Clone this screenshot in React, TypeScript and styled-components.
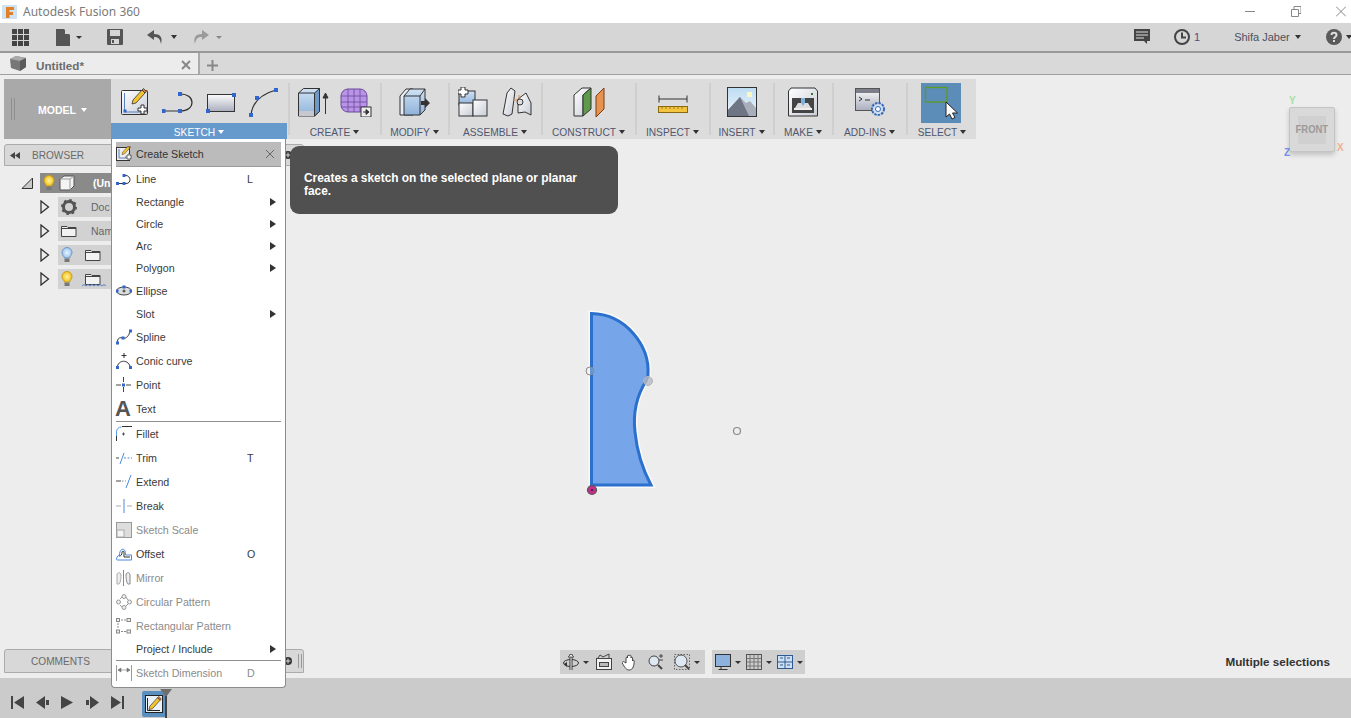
import React from "react";
import styled, { createGlobalStyle } from "styled-components";

const Global = createGlobalStyle`
  html, body { margin: 0; padding: 0; overflow: hidden; background: #ededed; }
  body { font-family: "Liberation Sans", Arial, sans-serif; }
  * { box-sizing: border-box; }
  svg { display: block; flex: none; }
`;

const Root = styled.div`
  height: 100vh; display: flex; flex-direction: column; overflow: hidden; position: relative;
`;
const TitleBar = styled.div`
  height: 23px; background: #fff; display: flex; align-items: center; padding-left: 2px;
`;
const TitleText = styled.span`
  margin-left: 5px; font: 12px "Noto Sans", sans-serif; color: #7b7b7b;
`;
const WinControls = styled.div`
  margin-left: auto; display: flex; align-items: center; gap: 35.5px; padding-right: 5px;
`;
const TopBar = styled.div`
  height: 30px; background: #d6d6d6; border-bottom: 2px solid #989898; display: flex; align-items: center; overflow: hidden; white-space: nowrap;
`;
const TopSlot = styled.div<{ $ml: number }>`
  margin-left: ${p => p.$ml}px; display: flex; align-items: center; flex: none;
`;
const Caret = styled.span<{ $c?: string; $ml?: number; $s?: number }>`
  display: inline-block; flex: none; width: 0; height: 0;
  margin-left: ${p => p.$ml ?? 4}px;
  border-left: ${p => p.$s ?? 3.5}px solid transparent;
  border-right: ${p => p.$s ?? 3.5}px solid transparent;
  border-top: ${p => (p.$s ?? 3.5) + 0.5}px solid ${p => p.$c ?? "#333"};
`;
const UserName = styled.span`
  font-size: 11px; color: #4d5060;
`;
const CountText = styled.span`
  margin-left: 4px; font-size: 11px; color: #5a4a80;
`;
const TabBar = styled.div`
  height: 22px; background: #d9d9d9; border-bottom: 1px solid #a0a0a0; display: flex; align-items: stretch;
`;
const Tab = styled.div`
  width: 200px; background: #ececec; border-right: 2px solid #aaa; display: flex; align-items: center; padding-left: 10px;
`;
const TabTitle = styled.span`
  margin: 4px 0 0 10px; font-size: 11.7px; font-weight: bold; color: #6c6c6c;
`;
const TabClose = styled.div`
  margin: 3px 7px 0 auto;
`;
const TabPlus = styled.div`
  margin: 3px 0 0 7px; align-self: center;
`;
const Main = styled.div`
  flex: 1; position: relative; background: #ededed; display: flex; flex-direction: column; padding: 4px 0 5px 4px; min-height: 0;
`;
const Toolbar = styled.div`
  display: flex; align-self: flex-start; height: 60px; background: #dcdcdc; position: relative; z-index: 5;
`;
const ModelBlock = styled.div`
  width: 107px; background: #a9a9a9; display: flex; align-items: center; padding-left: 7px; color: #fff; font-size: 10.5px; font-weight: bold;
`;
const Grip = styled.div`
  width: 4px; height: 22px; border-left: 1px solid #8f8f8f; border-right: 1px solid #8f8f8f;
`;
const ModelLabel = styled.span`
  margin: 2px 0 0 23px; display: flex; align-items: center;
`;
const Group = styled.div<{ $w: number }>`
  width: ${p => p.$w}px; display: flex; flex-direction: column; position: relative;
`;
const IconRow = styled.div<{ $gap?: number }>`
  height: 44px; padding-top: 8px; display: flex; justify-content: center; align-items: flex-start; gap: ${p => p.$gap ?? 0}px;
`;
const GroupLabel = styled.div<{ $active?: boolean }>`
  height: 16px; padding-top: 2px; display: flex; align-items: center; justify-content: center;
  font-size: 10.2px; color: ${p => (p.$active ? "#fff" : "#51566e")};
  background: ${p => (p.$active ? "#6699cc" : "transparent")};
`;
const Sep = styled.div`
  width: 3px; margin: 4px 0;
  background: linear-gradient(#cfcfcf, #cfcfcf) 1px 0 / 2px 100% no-repeat;
`;
const SelectBox = styled.div`
  width: 40px; height: 40px; margin: -4px 0 0 -2px; background: #5b8db8;
`;
const Menu = styled.div`
  position: absolute; left: 0; top: 100%; width: 175px; height: 549px; background: #fff;
  border: 1px solid #8c8c8c; border-top: 0; border-radius: 0 0 4px 4px; padding: 3px 4px 0; color: #3a3a3a; z-index: 20;
`;
const MenuHeader = styled.div`
  height: 25px; background: #bbbbbb; border-bottom: 1px solid #9a9a9a; display: flex; align-items: center; font-size: 10.7px; color: #333;
`;
const HeaderIcon = styled.div`
  width: 20px;
`;
const HeaderClose = styled.div`
  margin-left: auto; margin-right: 6px;
`;
const Row = styled.div<{ $h: number; $off?: boolean }>`
  height: ${p => p.$h}px; display: grid; grid-template-columns: 20px 111px 20px 14px; align-items: center;
  font-size: 10.7px; color: ${p => (p.$off ? "#8b8b8b" : "#3a3a3a")};
`;
const Arrow = styled.span`
  grid-column: 4; width: 0; height: 0; margin-left: 3px;
  border-top: 4.5px solid transparent; border-bottom: 4.5px solid transparent; border-left: 6px solid #333;
`;
const MenuSep = styled.div`
  height: 1px; background: #8f8f8f;
`;
const Tooltip = styled.div`
  position: absolute; left: calc(100% + 5px); top: 7px; width: 328px; height: 68px; background: #505050; border-radius: 9px;
  display: flex; align-items: center; padding: 10px 36px 0 14px; color: #fff; font-size: 11.9px; font-weight: bold; line-height: 13px;
`;
const Side = styled.div`
  flex: 1; width: 300px; padding-top: 5px; min-height: 0;
`;
const PanelHead = styled.div<{ $h: number }>`
  height: ${p => p.$h}px; width: 300px; flex: none; background: #d8d8d8; border: 1px solid #ababab; border-radius: 3px 3px 0 0; display: flex; align-items: center;
  padding-left: 5px; font-size: 10.1px; color: #6a6a6a; position: relative;
`;
const PanelLabel = styled.span<{ $ml: number }>`
  margin-left: ${p => p.$ml}px;
`;
const PanelEnd = styled.div`
  margin-left: auto; margin-right: 1px; display: flex; align-items: center; gap: 6px;
`;
const Tree = styled.div`
  padding-top: 5px;
`;
const TreeRow = styled.div<{ $indent: number }>`
  height: 24px; display: flex; align-items: center; padding-left: ${p => p.$indent}px;
`;
const Pill = styled.div<{ $dark?: boolean }>`
  width: ${p => (p.$dark ? 72 : 54)}px; height: 20px; margin-left: ${p => (p.$dark ? 7 : 8)}px; background: ${p => (p.$dark ? "#8a8a8a" : "#d2d2d2")};
  display: flex; align-items: center; padding-left: 3px; gap: 4px;
  font-size: 10.5px; font-weight: ${p => (p.$dark ? "bold" : "normal")}; color: ${p => (p.$dark ? "#fff" : "#666")}; white-space: nowrap;
`;
const PillText = styled.span<{ $ml: number }>`
  margin-left: ${p => p.$ml}px;
`;
const BottomRow = styled.div`
  display: flex; align-items: center; height: 24px; flex: none;
`;
const NavArea = styled.div`
  margin-left: 256px; margin-top: 2px; display: flex; gap: 7px;
`;
const NavGroup = styled.div<{ $w: number }>`
  width: ${p => p.$w}px; height: 24px; background: #cfcfcf; display: flex; align-items: center; padding-left: 3px;
`;
const NavCaret = styled(Caret)`
  margin: 0 5px 0 4px;
`;
const NavSpace = styled.span<{ $w: number }>`
  width: ${p => p.$w}px; flex: none;
`;
const Status = styled.div`
  margin-left: auto; margin-right: 21px; font-size: 11.7px; font-weight: bold; color: #333;
`;
const Timeline = styled.div`
  height: 40px; background: #cbcbcb; display: flex; align-items: center; padding: 8px 0 0 11px; position: relative; flex: none;
`;
const TimeBtn = styled.div`
  margin-right: 12px;
`;
const Feature = styled.div`
  margin-left: 6px; width: 24px; height: 26px; margin-top: 4px; background: #5a8fc0; border-radius: 2px; display: flex; align-items: center; justify-content: center;
`;
const Marker = styled.div`
  position: absolute; left: 160px; top: 11px; width: 12px; height: 8px; background: #6e6e6e; clip-path: polygon(0 0, 100% 0, 50% 100%);
`;
const Playhead = styled.div`
  position: absolute; left: 165px; top: 18px; width: 2px; height: 22px; background: #444;
`;
const SketchLayer = styled.svg`
  position: absolute; left: 560px; top: 225px;
`;
const Cube = styled.div`
  position: absolute; left: 1289px; top: 32px; width: 46px; height: 45px; background: #d9d9d9; border: 1px solid #c4c4c4; border-radius: 2px;
  box-shadow: 0 3px 5px rgba(0,0,0,.18); display: flex; align-items: center; justify-content: center;
`;
const CubeFace = styled.div`
  width: 28px; height: 28px; padding-bottom: 2px; background: #d0d0d0; display: flex; align-items: center; justify-content: center;
  font-size: 11.5px; font-weight: bold; color: #9a9a9a;
`;
const CubeText = styled.span`
  display: inline-block; transform: scaleX(.82);
`;
const Axis = styled.span<{ $x: number; $y: number; $c: string }>`
  position: absolute; left: ${p => p.$x}px; top: ${p => p.$y}px; font-size: 10px; font-weight: bold; color: ${p => p.$c}; line-height: 10px;
`;

const Defs = () => (
  <svg width="0" height="0" style={{ position: "absolute" }}>
    <defs>
      <linearGradient id="blue" x1="0" y1="0" x2="0" y2="1"><stop offset="0" stopColor="#cfe2f4" /><stop offset="1" stopColor="#8fb2da" /></linearGradient>
      <linearGradient id="gray" x1="0" y1="0" x2="0" y2="1"><stop offset="0" stopColor="#fdfdfd" /><stop offset="1" stopColor="#a9adbd" /></linearGradient>
      <linearGradient id="light" x1="0" y1="0" x2="1" y2="1"><stop offset="0" stopColor="#fff" /><stop offset="1" stopColor="#c8ccd6" /></linearGradient>
      <linearGradient id="sky" x1="0" y1="0" x2="0" y2="1"><stop offset="0" stopColor="#bcdcf2" /><stop offset="1" stopColor="#eef6fb" /></linearGradient>
      <radialGradient id="bulb"><stop offset="0" stopColor="#fff59a" /><stop offset="1" stopColor="#f1c01c" /></radialGradient>
      <radialGradient id="bulbB"><stop offset="0" stopColor="#e8f4ff" /><stop offset="1" stopColor="#9cc4ee" /></radialGradient>
    </defs>
  </svg>
);

const P = "#3366cc";
const Pt = ({ x, y, s = 3 }: { x: number; y: number; s?: number }) => <rect x={x - s / 2} y={y - s / 2} width={s} height={s} fill={P} />;

const Logo = () => (
  <svg width="16" height="16" viewBox="0 0 16 16">
    <rect x="0" y="1" width="15" height="14" fill="#cfe3f2" />
    <path d="M4 3h8v3H7.5v2H11v3H7.5v3H4z" fill="#e0812a" />
  </svg>
);
const Minimize = () => <svg width="10" height="11"><path d="M0 5.5h10" stroke="#888" /></svg>;
const Restore = () => <svg width="10" height="11"><path d="M.5 3.5h7v7h-7zM3 3V.5h7v7H8" fill="none" stroke="#888" /></svg>;
const WinClose = () => <svg width="10" height="11"><path d="M0 .5l10 10M10 .5l-10 10" stroke="#888" /></svg>;

const D = "#444";
const GridIcon = () => (
  <svg width="17" height="17" fill={D}>
    {[0, 6, 12].flatMap(y => [0, 6, 12].map(x => <rect key={`${x}${y}`} x={x} y={y} width="5" height="5" />))}
  </svg>
);
const DocIcon = () => <svg width="14" height="17"><path d="M0 0h8l6 6v11H0z" fill="#555" /><path d="M9 0l5 5H9z" fill="#d6d6d6" /></svg>;
const SaveIcon = () => (
  <svg width="16" height="16">
    <path d="M1 0h14a1 1 0 0 1 1 1v14a1 1 0 0 1-1 1H1a1 1 0 0 1-1-1V1a1 1 0 0 1 1-1z" fill="#555" />
    <rect x="3" y="1" width="10" height="6" fill="#d6d6d6" /><rect x="4" y="10" width="8" height="5" fill="#d6d6d6" /><rect x="5" y="11" width="2" height="3" fill="#555" />
  </svg>
);
const UndoIcon = ({ c, flip }: { c: string; flip?: boolean }) => (
  <svg width="17" height="14" viewBox="0 0 17 14" style={flip ? { transform: "scaleX(-1)" } : undefined}>
    <path d="M7 0L0 5l7 5V7c4 0 6 1 7 7 2-7-1-10-7-10z" fill={c} />
  </svg>
);
const CommentIcon = () => (
  <svg width="16" height="16"><path d="M0 0h16v12h-3v3l-3-3H0z" fill="#444" /><path d="M2 3h12M2 6h12M2 9h8" stroke="#ddd" /></svg>
);
const ClockIcon = () => (
  <svg width="16" height="16"><circle cx="8" cy="8" r="7" fill="none" stroke="#444" strokeWidth="2" /><path d="M8 3.5V8.5H12" fill="none" stroke="#444" strokeWidth="2" /></svg>
);
const HelpIcon = () => (
  <svg width="16" height="16"><circle cx="8" cy="8" r="8" fill="#5a5a5a" /><path d="M5.5 6c0-3 5-3 5 0 0 2-2.5 2-2.5 4" fill="none" stroke="#ddd" strokeWidth="2" /><rect x="7" y="11" width="2" height="2" fill="#ddd" /></svg>
);
const TabCube = () => (
  <svg width="16" height="16">
    <path d="M0 3l6-3 10 2v9l-6 4-9-3z" fill="#777" /><path d="M0 3l10 2 6-3-10-2z" fill="#aaa" /><path d="M10 5v10l6-4V2z" fill="#5c5c5c" />
  </svg>
);
const XIcon = ({ s = 10, c = "#888", w = 2 }: { s?: number; c?: string; w?: number }) => (
  <svg width={s} height={s}><path d={`M1 1L${s - 1} ${s - 1}M${s - 1} 1L1 ${s - 1}`} stroke={c} strokeWidth={w} /></svg>
);
const PlusIcon = () => <svg width="11" height="11"><path d="M5.5 0v11M0 5.5h11" stroke="#888" strokeWidth="2" /></svg>;

const Pencil = ({ x = 0, y = 0, s = 1 }: { x?: number; y?: number; s?: number }) => (
  <g transform={`translate(${x} ${y}) scale(${s})`}>
    <path d="M1 12l9-10 3 3-9 10-4 1z" fill="#f4c430" stroke="#333" strokeWidth=".8" />
    <path d="M10 2l1.5-1.5 3 3L13 5z" fill="#e27d2b" stroke="#333" strokeWidth=".8" />
  </g>
);
const CreateSketchBig = () => (
  <svg width="30" height="30" viewBox="0 0 30 30">
    <rect x="1.5" y="3.5" width="26" height="24" rx="1" fill="url(#light)" stroke="#333" />
    <path d="M4.5 6v19h16" fill="none" stroke="#5a7fc0" />
    <Pt x={5} y={24} />
    <Pencil x={12} y={1} />
    <path d="M21 18h3v3h3v3h-3v3h-3v-3h-3v-3h3z" fill="#fff" stroke="#333" />
  </svg>
);
const LineBig = () => (
  <svg width="32" height="30" viewBox="0 0 32 30">
    <path d="M1.500 24H18C26 24 30 20 30 15.500C30 11 26 7 18 7" fill="none" stroke="#333" strokeWidth="1.200" />
    <Pt x={1.500} y={24} s={4} /><Pt x={18} y={24} s={4} /><Pt x={18} y={7} s={4} />
  </svg>
);
const RectBig = () => (
  <svg width="30" height="30" viewBox="0 0 30 30">
    <rect x="1.500" y="7.500" width="27" height="17" fill="url(#gray)" stroke="#333" />
    <Pt x={28} y={8} s={4} /><Pt x={2} y={24} s={4} />
  </svg>
);
const ArcBig = () => (
  <svg width="30" height="30" viewBox="0 0 30 30">
    <path d="M3 28C4 18 10 8 28 3" fill="none" stroke="#333" strokeWidth="1.200" />
    <Pt x={3} y={28} s={4} /><Pt x={9} y={11} s={4} /><Pt x={28} y={3} s={4} />
  </svg>
);
const ExtrudeIcon = () => (
  <svg width="32" height="30" viewBox="0 0 32 30">
    <path d="M1.500 6l5-4.500h16v23l-5 4.500H1.500z" fill="url(#blue)" stroke="#333" />
    <path d="M17.500 6l5-4.500v23l-5 4.500z" fill="#6f98c8" stroke="#333" />
    <path d="M1.500 6h16" fill="none" stroke="#333" />
    <rect x="2" y="24" width="15" height="5" fill="#c5c8cf" />
    <path d="M28.500 27V8M26 11l2.500-5 2.500 5z" stroke="#333" fill="#333" />
  </svg>
);
const SculptIcon = () => (
  <svg width="32" height="30" viewBox="0 0 32 30">
    <rect x="1" y="2" width="26" height="23" rx="7" fill="#b993e8" stroke="#6a4a9a" />
    <path d="M1 9h26M1 15h26M1 20h26M8 2v23M14 2v23M20 2v23" stroke="#6a4a9a" strokeWidth=".8" />
    <rect x="21" y="20" width="10" height="10" fill="#eee" stroke="#333" />
    <path d="M23 25h4M26 22.500l3 2.500-3 2.500z" stroke="#333" fill="#333" />
  </svg>
);
const ModifyIcon = () => (
  <svg width="32" height="30" viewBox="0 0 32 30">
    <path d="M1 9l6-7h7v26H1z" fill="#e9ecf2" stroke="#333" />
    <path d="M5 9l6-7h15v21l-5 5H5z" fill="url(#blue)" stroke="#333" />
    <path d="M5 9h16v19M21 9l5-7" fill="none" stroke="#333" />
    <path d="M22 14h4v-3l5 5-5 5v-3h-4z" fill="#333" />
  </svg>
);
const AssembleNew = () => (
  <svg width="30" height="30" viewBox="0 0 30 30">
    <rect x="1" y="4" width="16" height="14" fill="url(#blue)" stroke="#333" />
    <rect x="1" y="16" width="14" height="13" fill="url(#light)" stroke="#333" />
    <rect x="15" y="13" width="14" height="16" fill="url(#light)" stroke="#333" />
    <path d="M3 0h4v3h3v4H7v3H3V7H0V3h3z" fill="#fff" stroke="#333" />
  </svg>
);
const JointIcon = () => (
  <svg width="30" height="30" viewBox="0 0 30 30">
    <path d="M1 27L5 6l4-5 4 3-3 23-4 2z" fill="url(#light)" stroke="#333" />
    <path d="M16 12l8-6 5 10v12l-6-3-7 1z" fill="url(#light)" stroke="#333" />
    <path d="M11 13h6M17 8v6" stroke="#e08a3c" />
    <circle cx="18" cy="15" r="3" fill="#ddd" stroke="#333" />
  </svg>
);
const ConstructIcon = () => (
  <svg width="32" height="30" viewBox="0 0 32 30">
    <path d="M1 8l8-7h9l-8 7v21H1z" fill="url(#light)" stroke="#333" />
    <path d="M10 8l8-7v21l-8 7z" fill="#5f9a4a" stroke="#333" />
    <path d="M23 9l8-8v21l-8 8z" fill="#e6934f" stroke="#7a3c10" />
  </svg>
);
const InspectIcon = () => (
  <svg width="30" height="30" viewBox="0 0 30 30">
    <path d="M1 12h28M1 8.500v7M29 8.500v7" stroke="#333" />
    <rect x="0.500" y="19.500" width="29" height="6" fill="#f2c440" stroke="#8a6a10" />
    <path d="M4 20v2M8 20v2M12 20v2M16 20v2M20 20v2M24 20v2" stroke="#8a6a10" strokeWidth=".8" />
  </svg>
);
const InsertIcon = () => (
  <svg width="30" height="30" viewBox="0 0 30 30">
    <rect x="0.500" y="0.500" width="29" height="29" fill="url(#sky)" stroke="#333" />
    <rect x="20" y="5" width="5" height="5" fill="#fdf6c0" />
    <path d="M1 29V23l12-13 6 6 4-2 6 7v8z" fill="#a8afba" />
    <path d="M1 29V23l12-13 9 19z" fill="#6e7686" />
  </svg>
);
const MakeIcon = () => (
  <svg width="30" height="30" viewBox="0 0 30 30">
    <path d="M3 1h24l2.500 3v25H.500V4z" fill="url(#light)" stroke="#333" />
    <rect x="23" y="6" width="2" height="2" fill="#2a7a2a" />
    <rect x="4" y="11" width="22" height="15" fill="#444" />
    <path d="M7 21l3-5h10l3 5z" fill="#ddd" />
    <path d="M13 11h4v5l-2 3-2-3z" fill="#7eb0e0" />
    <rect x="6" y="21" width="18" height="2" fill="#eee" />
  </svg>
);
const AddinsIcon = () => (
  <svg width="30" height="30" viewBox="0 0 30 30">
    <rect x="0.500" y="1.500" width="24" height="22" fill="url(#gray)" stroke="#555" />
    <rect x="1" y="2" width="23" height="4" fill="#7c7f8a" />
    <path d="M4 10l3 2-3 2M10 13h5" fill="none" stroke="#333" />
    <circle cx="23" cy="22" r="6" fill="#cfe0f5" stroke="#3a6ab0" strokeWidth="2" strokeDasharray="2.500 1" />
    <circle cx="23" cy="22" r="2.500" fill="#fff" stroke="#3a6ab0" />
  </svg>
);
const SelectIcon = () => (
  <svg width="40" height="40" viewBox="0 0 40 40">
    <rect x="4.500" y="4.500" width="21.500" height="14.500" fill="none" stroke="#5e9a1e" strokeWidth="1.300" />
    <path d="M25 19v15l3.500-3 2.500 5 3-1.500-2.500-4.500h5z" fill="#fff" stroke="#222" />
  </svg>
);

const M = ({ children }: { children: React.ReactNode }) => <svg width="16" height="16" viewBox="0 0 16 16" fill="none">{children}</svg>;
const MI: Record<string, React.ReactNode> = {
  sketch: <M><rect x=".5" y="1.500" width="13" height="13" fill="#eee" stroke="#333" /><path d="M3 3v9h8" stroke="#5a7fc0" /><Pencil x={6} y={-1} s={.6} /><path d="M10 10h2V8h2v2h2v2h-2v2h-2v-2h-2z" fill="#fff" stroke="#333" strokeWidth=".7" /></M>,
  line: <M><path d="M1 12.500h9c3 0 4-2 4-4s-2-4-4-4H8" stroke="#333" /><Pt x={1.500} y={12.500} /><Pt x={8} y={12.500} /><Pt x={8} y={4.500} /></M>,
  ellipse: <M><ellipse cx="8" cy="8" rx="7.500" ry="4" fill="#ddd" stroke="#444" /><path d="M6.500 8h3M8 6.500v3" stroke="#333" /><Pt x={8} y={4} /><Pt x={15} y={8} /><Pt x={1} y={8} /></M>,
  spline: <M><path d="M1.500 14C1 9 4 8 7 9s6-2 7-7" stroke="#333" /><Pt x={1.500} y={14} /><Pt x={7} y={9} /><Pt x={14.500} y={2} /></M>,
  conic: <M><path d="M1 15C2 6 13 6 14.500 15" stroke="#333" /><path d="M8 0v5M5.500 2.500h5" stroke="#333" /><Pt x={1.500} y={14.500} /><Pt x={14.500} y={14.500} /></M>,
  point: <M><path d="M0 8h5M10 8h5M7.500 0v5M7.500 10v5" stroke="#444" /><Pt x={7.500} y={8} /></M>,
  fillet: <M><path d="M.5 15V6c0-3 2-5 5-5" stroke="#5a9ae8" /><path d="M.5 15v-5M6 .5h10" stroke="#333" /><path d="M6 8h3M7.500 6.500v3" stroke="#333" strokeWidth=".8" /></M>,
  trim: <M><path d="M0 8h3" stroke="#444" /><path d="M8 3L4 14" stroke="#4a8ae0" /><path d="M8 8h8" stroke="#4a8ae0" strokeDasharray="2 1.500" /></M>,
  extend: <M><path d="M0 7h5" stroke="#444" /><path d="M6 7h4" stroke="#888" strokeDasharray="1.500 1.500" /><path d="M15 1L10 14" stroke="#4a8ae0" /></M>,
  break: <M><path d="M0 8h5M11 8h5" stroke="#aaa" /><path d="M8 1v14" stroke="#4a8ae0" /></M>,
  scale: <M><rect x=".5" y=".5" width="15" height="15" fill="#ddd" stroke="#999" /><rect x="1" y="8" width="7" height="7" fill="#f5f5f5" stroke="#aaa" /></M>,
  offset: <M><path d="M.5 13c0-3 3-4 3-4 0-5 3-7 5-5 1 1 1 4 1 5h6v5H2c-1 0-1.500 0-1.500-1z" stroke="#4a8ae0" /><path d="M3 10c2 0 3-1 3-4 0-1 2-1 2 0v5h6" stroke="#333" /></M>,
  mirror: <M><path d="M7.500 0v16" stroke="#888" /><path d="M1 14V5c0-3 4-3 4 0 0 4-1 9-2 9z" fill="#eee" stroke="#aaa" /><path d="M14 14V5c0-3-4-3-4 0 0 4 1 9 2 9z" fill="#eee" stroke="#888" /></M>,
  circular: <M><g fill="#eee" stroke="#999"><circle cx="8" cy="2.500" r="2" /><circle cx="2.500" cy="8" r="2" /><circle cx="13.500" cy="8" r="2" /><circle cx="8" cy="13.500" r="2" /></g><path d="M4 5l2-2M10 3l2 3M12 10l-2 2M4 11l2 2" stroke="#999" /></M>,
  rect: <M><g fill="#eee" stroke="#888"><rect x=".5" y=".5" width="3" height="3" /><rect x="11" y=".5" width="3.500" height="3" /><rect x=".5" y="12" width="3" height="3" /><rect x="11" y="12" width="3.500" height="3" /></g><path d="M5 2h5M5 13.500h5M2 5v6" stroke="#888" strokeDasharray="2 1" /></M>,
  dim: <M><path d="M.5 0v16M15.500 0v16" stroke="#999" /><path d="M2 5h12M2 5l3-2v4zM14 5l-3-2v4z" stroke="#777" fill="#777" strokeWidth=".6" /></M>,
};

type Item = { t: string; i?: string; k?: string; sub?: boolean; off?: boolean; h?: number } | "sep";
const items: Item[] = [
  { t: "Line", i: "line", k: "L" },
  { t: "Rectangle", sub: true, h: 22 }, { t: "Circle", sub: true, h: 22 }, { t: "Arc", sub: true, h: 22 }, { t: "Polygon", sub: true, h: 22 },
  { t: "Ellipse", i: "ellipse" }, { t: "Slot", sub: true, h: 22 }, { t: "Spline", i: "spline" }, { t: "Conic curve", i: "conic" }, { t: "Point", i: "point" },
  { t: "Text", i: "text" }, "sep",
  { t: "Fillet", i: "fillet" }, { t: "Trim", i: "trim", k: "T" }, { t: "Extend", i: "extend" }, { t: "Break", i: "break" },
  { t: "Sketch Scale", i: "scale", off: true }, { t: "Offset", i: "offset", k: "O" }, { t: "Mirror", i: "mirror", off: true },
  { t: "Circular Pattern", i: "circular", off: true }, { t: "Rectangular Pattern", i: "rect", off: true },
  { t: "Project / Include", sub: true, h: 22 }, "sep", { t: "Sketch Dimension", i: "dim", k: "D", off: true },
];
const BigA = styled.span`
  font-size: 22px; font-weight: bold; color: #555; line-height: 16px; margin-left: -1px;
`;

const SketchMenu = () => (
  <Menu>
    <MenuHeader>
      <HeaderIcon>{MI.sketch}</HeaderIcon>Create Sketch
      <HeaderClose><XIcon s={10} c="#666" w={1} /></HeaderClose>
    </MenuHeader>
    {items.map((it, n) =>
      it === "sep" ? <MenuSep key={n} /> : (
        <Row key={it.t} $h={it.h ?? 24} $off={it.off}>
          <div>{it.i === "text" ? <BigA>A</BigA> : it.i ? MI[it.i] : null}</div>
          <span>{it.t}</span>
          {it.k ? <span>{it.k}</span> : null}
          {it.sub ? <Arrow /> : null}
        </Row>
      )
    )}
    <Tooltip>Creates a sketch on the selected plane or planar face.</Tooltip>
  </Menu>
);

const Bulb = ({ blue }: { blue?: boolean }) => (
  <svg width="12" height="16" viewBox="0 0 12 16">
    <path d="M6 .5a5 5 0 0 1 5 5c0 2.500-2 3.500-2.500 5.500h-5C3 9 1 8 1 5.500a5 5 0 0 1 5-5z" fill={blue ? "url(#bulbB)" : "url(#bulb)"} stroke={blue ? "#6f96c4" : "#c79a1a"} />
    <rect x="3.500" y="11.500" width="5" height="3.500" fill="#777" />
  </svg>
);
const Folder = ({ wave }: { wave?: boolean }) => (
  <svg width="16" height="16" viewBox="0 0 16 16" overflow="visible">
    <path d="M.5 3.500v10h14.500v-9H7l-1-1z" fill="#f2f2f2" stroke="#444" />
    <path d="M.5 5.500h14.500" stroke="#444" />
    {wave ? <path d="M-3 15l2-1.500 2 1.500 2-1.500 2 1.500 2-1.500 2 1.500 2-1.500 2 1.500 2-1.500 2 1.500 2-1.500 2 1.500" stroke="#5a7fc0" fill="none" /> : null}
  </svg>
);
const Gear = () => (
  <svg width="16" height="16" viewBox="0 0 16 16">
    <circle cx="8" cy="8" r="5.500" fill="none" stroke="#555" strokeWidth="3" />
    <circle cx="8" cy="8" r="7" fill="none" stroke="#555" strokeWidth="2" strokeDasharray="2.500 3" />
  </svg>
);
const WhiteCube = () => (
  <svg width="16" height="16" viewBox="0 0 16 16">
    <path d="M1 4l4-3h10v10l-4 4H1z" fill="#f4f4f4" stroke="#555" /><path d="M1 4h10v11M11 4l4-3" fill="none" stroke="#999" />
  </svg>
);
const Expand = () => <svg width="10" height="14"><path d="M1 1l7.500 6L1 13z" fill="#ececec" stroke="#333" strokeWidth="1.300" /></svg>;
const Collapse = () => <svg width="12" height="12"><path d="M1 11.500h10.500V1z" fill="#c9c9c9" stroke="#333" /></svg>;
const Rewind = () => <svg width="10" height="7" fill="#444"><path d="M5 0v7L0 3.500zM10 0v7L5 3.500z" /></svg>;
const Pin = () => <svg width="8" height="8"><circle cx="4" cy="4" r="4" fill="#333" /><path d="M4 1.500v5M1.500 4h5" stroke="#ddd" /></svg>;
const GripV = () => <svg width="4" height="14"><path d="M.5 0v14M3.500 0v14" stroke="#999" /></svg>;

const N = ({ children }: { children: React.ReactNode }) => <svg width="16" height="18" viewBox="0 0 16 18" fill="none">{children}</svg>;
const Nav = {
  orbit: <N><ellipse cx="8" cy="10" rx="7.500" ry="3.500" stroke="#333" /><path d="M8 1v16" stroke="#333" strokeWidth="3" /><path d="M8 1v16" stroke="#fff" /><path d="M5 4l3-3 3 3z" fill="#eee" stroke="#333" strokeWidth=".7" /><path d="M1 11l3 3v-5z" fill="#333" /></N>,
  look: <N><rect x=".5" y="5.500" width="15" height="11" fill="#f1f1f1" stroke="#444" /><rect x="3.500" y="9.500" width="9" height="4" fill="#bbb" stroke="#444" /><path d="M2 5l2-3 3 2 6-3v4" stroke="#444" /></N>,
  hand: <N><path d="M4 10V5c0-1 1.500-1 1.500 0V3c0-1 1.700-1 1.700 0v0c0-1 1.800-1 1.800 0v2c0-1 1.600-1 1.600 0v3c0-1 1.600-1 1.600 0 0 4-1 9-5 9-3 0-4-2-7-7-.5-1 1-2 2-1z" fill="#fff" stroke="#444" /></N>,
  zoom: <N><circle cx="6" cy="8" r="5" fill="#dde8f2" stroke="#444" /><path d="M10 12l4 4" stroke="#444" strokeWidth="2" /><path d="M13 1v4M11 3h4M11 7h4" stroke="#444" /></N>,
  fit: <N><rect x=".5" y="1.500" width="15" height="15" stroke="#666" strokeDasharray="1.500 1.500" /><circle cx="7" cy="8" r="6" fill="#dde8f2" stroke="#555" /><path d="M11 12l4 4" stroke="#444" strokeWidth="2" /></N>,
  display: <N><rect x=".5" y="1.500" width="15" height="12" fill="#8db2de" stroke="#333" /><path d="M6 14v2M3.500 16.500h9" stroke="#333" /></N>,
  grid: <N><rect x=".5" y="1.500" width="15" height="15" fill="#ccc" stroke="#555" /><path d="M4 2v14M8 2v14M12 2v14M1 5.500h14M1 9h14M1 13h14" stroke="#777" /></N>,
  view: <N><rect x=".5" y="2.500" width="15" height="13" fill="#cfe0f2" stroke="#2e5a94" /><path d="M8 3v12M1 9h14" stroke="#2e5a94" /><path d="M3 5h3M10 5h3M3 12h3M10 12h3" stroke="#2e5a94" /></N>,
};
const T = "#444";
const Ctl = {
  start: <svg width="13" height="13"><path d="M0 0h2v13H0zM13 0v13L3 6.500z" fill={T} /></svg>,
  prev: <svg width="13" height="13"><path d="M9 0v13L0 6.500zM10 4h3v5h-3z" fill={T} /></svg>,
  play: <svg width="13" height="13"><path d="M0 0l12 6.500L0 13z" fill={T} /></svg>,
  next: <svg width="13" height="13"><path d="M4 0v13l9-6.500zM0 4h3v5H0z" fill={T} /></svg>,
  end: <svg width="13" height="13"><path d="M11 0h2v13h-2zM0 0v13l10-6.500z" fill={T} /></svg>,
};
const FeatureIcon = () => (
  <svg width="18" height="18" viewBox="0 0 18 18">
    <rect x=".5" y=".5" width="17" height="17" fill="#eaf1f8" stroke="#222" />
    <path d="M2.500 3v12.500H15" stroke="#222" fill="none" />
    <Pencil x={4} y={1} s={.85} />
  </svg>
);

const shapePath = "M591.500 313.500C625 314 650 345 648 375Q647.500 378 646 381C636 397 633 415 635 432C637 452 643 470 651 485L591.500 485Z";

const App = () => (
  <Root>
    <Global />
    <Defs />
    <TitleBar>
      <Logo />
      <TitleText>Autodesk Fusion 360</TitleText>
      <WinControls><Minimize /><Restore /><WinClose /></WinControls>
    </TitleBar>
    <TopBar>
      <TopSlot $ml={12}><GridIcon /></TopSlot>
      <TopSlot $ml={27}><DocIcon /><Caret $ml={6} $s={3} /></TopSlot>
      <TopSlot $ml={25}><SaveIcon /></TopSlot>
      <TopSlot $ml={24}><UndoIcon c="#555" /><Caret $ml={7} $s={3.500} /></TopSlot>
      <TopSlot $ml={15}><UndoIcon c="#9a9a9a" flip /><Caret $ml={7} $s={3} $c="#888" /></TopSlot>
      <TopSlot $ml={912}><CommentIcon /></TopSlot>
      <TopSlot $ml={24}><ClockIcon /><CountText>1</CountText></TopSlot>
      <TopSlot $ml={34}><UserName>Shifa Jaber</UserName><Caret $ml={5} /></TopSlot>
      <TopSlot $ml={25}><HelpIcon /><Caret $ml={4} /></TopSlot>
    </TopBar>
    <TabBar>
      <Tab>
        <TabCube />
        <TabTitle>Untitled*</TabTitle>
        <TabClose><XIcon /></TabClose>
      </Tab>
      <TabPlus><PlusIcon /></TabPlus>
    </TabBar>
    <Main>
      <Toolbar>
        <ModelBlock><Grip /><ModelLabel>MODEL<Caret $c="#fff" $ml={5} /></ModelLabel></ModelBlock>
        <Group $w={176}>
          <IconRow $gap={12}><CreateSketchBig /><LineBig /><RectBig /><ArcBig /></IconRow>
          <GroupLabel $active>SKETCH<Caret $c="#fff" $ml={3} /></GroupLabel>
          <SketchMenu />
        </Group>
        <Sep />
        <Group $w={89}><IconRow $gap={11}><ExtrudeIcon /><SculptIcon /></IconRow><GroupLabel>CREATE<Caret $ml={3} /></GroupLabel></Group>
        <Sep />
        <Group $w={65}><IconRow><ModifyIcon /></IconRow><GroupLabel>MODIFY<Caret $ml={3} /></GroupLabel></Group>
        <Sep />
        <Group $w={90}><IconRow $gap={14}><AssembleNew /><JointIcon /></IconRow><GroupLabel>ASSEMBLE<Caret $ml={3} /></GroupLabel></Group>
        <Sep />
        <Group $w={91}><IconRow><ConstructIcon /></IconRow><GroupLabel>CONSTRUCT<Caret $ml={3} /></GroupLabel></Group>
        <Sep />
        <Group $w={71}><IconRow><InspectIcon /></IconRow><GroupLabel>INSPECT<Caret $ml={3} /></GroupLabel></Group>
        <Sep />
        <Group $w={61}><IconRow><InsertIcon /></IconRow><GroupLabel>INSERT<Caret $ml={3} /></GroupLabel></Group>
        <Sep />
        <Group $w={56}><IconRow><MakeIcon /></IconRow><GroupLabel>MAKE<Caret $ml={3} /></GroupLabel></Group>
        <Sep />
        <Group $w={71}><IconRow><AddinsIcon /></IconRow><GroupLabel>ADD-INS<Caret $ml={3} /></GroupLabel></Group>
        <Sep />
        <Group $w={68}><IconRow><SelectBox><SelectIcon /></SelectBox></IconRow><GroupLabel>SELECT<Caret $ml={3} /></GroupLabel></Group>
      </Toolbar>

      <Side>
        <PanelHead $h={22}>
          <Rewind /><PanelLabel $ml={12}>BROWSER</PanelLabel>
          <PanelEnd><Pin /><GripV /></PanelEnd>
        </PanelHead>
        <Tree>
          <TreeRow $indent={17}><Collapse /><Pill $dark><Bulb /><WhiteCube /><PillText $ml={14}>(Un</PillText></Pill></TreeRow>
          <TreeRow $indent={36}><Expand /><Pill><Gear /><PillText $ml={10}>Doc</PillText></Pill></TreeRow>
          <TreeRow $indent={36}><Expand /><Pill><Folder /><PillText $ml={10}>Nam</PillText></Pill></TreeRow>
          <TreeRow $indent={36}><Expand /><Pill><Bulb blue /><PillText $ml={8}><Folder /></PillText></Pill></TreeRow>
          <TreeRow $indent={36}><Expand /><Pill><Bulb /><PillText $ml={8}><Folder wave /></PillText></Pill></TreeRow>
        </Tree>
      </Side>

      <BottomRow>
        <PanelHead $h={24}><PanelLabel $ml={21}>COMMENTS</PanelLabel><PanelEnd><Pin /><GripV /></PanelEnd></PanelHead>
        <NavArea>
          <NavGroup $w={145}>
            {Nav.orbit}<NavCaret $s={3} /><NavSpace $w={2} />{Nav.look}<NavSpace $w={10} />{Nav.hand}<NavSpace $w={10} />{Nav.zoom}<NavSpace $w={10} />{Nav.fit}<NavCaret $s={3} />
          </NavGroup>
          <NavGroup $w={93}>
            {Nav.display}<NavCaret $s={3} />{Nav.grid}<NavCaret $s={3} />{Nav.view}<NavCaret $s={3} />
          </NavGroup>
        </NavArea>
        <Status>Multiple selections</Status>
      </BottomRow>

      <SketchLayer width="200" height="200" viewBox="560 300 200 200">
        <path d={shapePath} fill="#76a5ea" stroke="#fff" strokeOpacity=".7" strokeWidth="6" />
        <path d={shapePath} fill="#76a5ea" stroke="#2b70cc" strokeWidth="3" />
        <circle cx="590" cy="371" r="4" fill="#ededed" fillOpacity=".3" stroke="#8a8a8a" />
        <circle cx="648" cy="381" r="4.500" fill="#b5bac4" fillOpacity=".8" stroke="#b5b5b5" />
        <circle cx="737" cy="431" r="3.500" fill="#ededed" stroke="#8a8a8a" strokeWidth="1.200" />
        <circle cx="592" cy="490" r="4.500" fill="#c0308a" stroke="#555" strokeWidth="1.200" />
        <circle cx="592" cy="490" r="1" fill="#222" />
      </SketchLayer>

      <Cube><CubeFace><CubeText>FRONT</CubeText></CubeFace></Cube>
      <Axis $x={1289} $y={21} $c="#a4e0a0">Y</Axis>
      <Axis $x={1337} $y={68} $c="#f0b090">X</Axis>
      <Axis $x={1284} $y={73} $c="#7090e8">Z</Axis>
    </Main>
    <Timeline>
      <TimeBtn>{Ctl.start}</TimeBtn><TimeBtn>{Ctl.prev}</TimeBtn><TimeBtn>{Ctl.play}</TimeBtn><TimeBtn>{Ctl.next}</TimeBtn><TimeBtn>{Ctl.end}</TimeBtn>
      <Feature><FeatureIcon /></Feature>
      <Marker /><Playhead />
    </Timeline>
  </Root>
);

export default App;
